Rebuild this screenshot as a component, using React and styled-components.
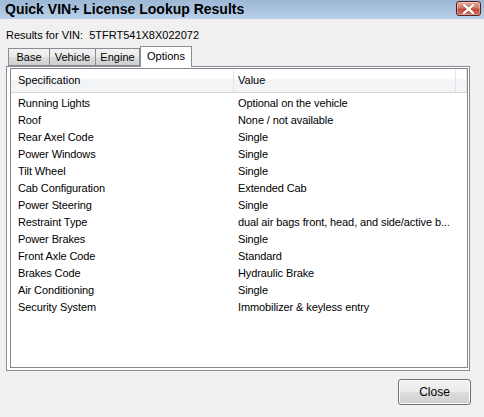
import React from 'react'
import styled, { createGlobalStyle } from 'styled-components';

const Global = createGlobalStyle`
  html, body { margin: 0; padding: 0; background: #f0f0f0; }
  body { font-family: "Liberation Sans", Arial, sans-serif; font-size: 11px; color: #000; }
`;

const rows = [
  ['Running Lights', 'Optional on the vehicle'],
  ['Roof', 'None / not available'],
  ['Rear Axel Code', 'Single'],
  ['Power Windows', 'Single'],
  ['Tilt Wheel', 'Single'],
  ['Cab Configuration', 'Extended Cab'],
  ['Power Steering', 'Single'],
  ['Restraint Type', 'dual air bags front, head, and side/active b...'],
  ['Power Brakes', 'Single'],
  ['Front Axle Code', 'Standard'],
  ['Brakes Code', 'Hydraulic Brake'],
  ['Air Conditioning', 'Single'],
  ['Security System', 'Immobilizer & keyless entry'],
];

const tabs = [
  { label: 'Base', w: 42 },
  { label: 'Vehicle', w: 46 },
  { label: 'Engine', w: 44 },
  { label: 'Options', w: 52, active: true },
];

function CloseGlyph() {
  return (
    <svg width="13" height="10" viewBox="0 0 13 10">
      <path d="M2 1 L11 9 M11 1 L2 9" stroke="#5a2020" strokeWidth="3.6" strokeLinecap="square" opacity="0.45" />
      <path d="M2 1 L11 9 M11 1 L2 9" stroke="#fff" strokeWidth="2.4" strokeLinecap="square" />
    </svg>
  );
}

function App() {
  return (
    <Window>
      <Global />
      <TitleBar>
        <Title>Quick VIN+ License Lookup Results</Title>
        <CloseX><CloseGlyph /></CloseX>
      </TitleBar>
      <Body>
        <VinLine>Results for VIN:&nbsp;&nbsp;5TFRT541X8X022072</VinLine>
        <TabStrip>
          {tabs.map(t => (
            <Tab key={t.label} $w={t.w} $active={t.active}>{t.label}</Tab>
          ))}
        </TabStrip>
        <Panel>
          <ListView>
            <HeaderRow>
              <HeaderCell $w={223} $pad={7}>Specification</HeaderCell>
              <HeaderCell $w={222} $pad={4}>Value</HeaderCell>
              <HeaderFill />
            </HeaderRow>
            <Rows>
              {rows.map(([spec, val]) => (
                <Row key={spec}>
                  <Cell $w={223} $pad={7}>{spec}</Cell>
                  <Cell $w={230} $pad={4}>{val}</Cell>
                </Row>
              ))}
            </Rows>
          </ListView>
        </Panel>
        <Footer>
          <Button>Close</Button>
        </Footer>
      </Body>
    </Window>
  )
}

const Window = styled.div`
  width: 484px;
  height: 417px;
  display: flex;
  flex-direction: column;
  background: #f0f0f0;
  overflow: hidden;
`;

const TitleBar = styled.div`
  height: 19px;
  display: flex;
  align-items: flex-start;
  justify-content: space-between;
  padding-left: 5px;
  background: linear-gradient(to bottom, #9db7d5 0%, #aac3df 50%, #b9d1ea 100%);
`;

const Title = styled.div`
  font-family: "Liberation Sans", Arial, sans-serif;
  font-weight: bold;
  font-size: 14px;
  line-height: 19px;
  color: #000;
`;

const CloseX = styled.div`
  width: 25px;
  height: 15px;
  margin: 1px 3px 0 0;
  box-sizing: border-box;
  border: 1px solid #5a1c22;
  border-radius: 3px;
  display: flex;
  align-items: center;
  justify-content: center;
  background: linear-gradient(to bottom, #e8a89c 0%, #d47a6a 45%, #c24a38 55%, #d0705c 100%);
  box-shadow: inset 0 0 0 1px rgba(255, 255, 255, 0.35);
`;

const Body = styled.div`
  flex: 1;
  display: flex;
  flex-direction: column;
  padding: 0 13px 0 6px;
`;

const VinLine = styled.div`
  margin-top: 10px;
  line-height: 13px;
`;

const TabStrip = styled.div`
  display: flex;
  align-items: flex-end;
  margin-top: 4px;
  padding-left: 2px;
  height: 20px;
  position: relative;
  z-index: 1;
`;

const Tab = styled.div`
  width: ${p => p.$w}px;
  height: ${p => (p.$active ? 21 : 18)}px;
  margin-bottom: ${p => (p.$active ? -1 : 0)}px;
  box-sizing: border-box;
  border: 1px solid #898c95;
  border-bottom: ${p => (p.$active ? 'none' : '1px solid #898c95')};
  border-left: ${p => (p.$active ? '1px solid #898c95' : 'none')};
  background: ${p => (p.$active ? '#ffffff' : 'linear-gradient(to bottom, #f2f2f2 0%, #ebebeb 50%, #dddddd 51%, #cfcfcf 100%)')};
  display: flex;
  align-items: ${p => (p.$active ? 'flex-start' : 'center')};
  padding-top: ${p => (p.$active ? 3 : 0)}px;
  justify-content: center;
  line-height: 13px;
  &:first-child { border-left: 1px solid #898c95; }
`;

const Panel = styled.div`
  width: 464px;
  height: 305px;
  box-sizing: border-box;
  border: 1px solid #898c95;
  background: #ffffff;
  padding: 1px 1px 2px 3px;
  display: flex;
`;

const ListView = styled.div`
  flex: 1;
  border: 1px solid #828790;
  background: #fff;
  display: flex;
  flex-direction: column;
  overflow: hidden;
`;

const HeaderRow = styled.div`
  height: 23px;
  display: flex;
  background: linear-gradient(to bottom, #ffffff 0%, #ffffff 45%, #f3f4f6 46%, #f3f4f6 100%);
  border-bottom: 1px solid #d5d5d5;
`;

const HeaderCell = styled.div`
  width: ${p => p.$w}px;
  box-sizing: border-box;
  padding-left: ${p => p.$pad}px;
  border-right: 1px solid #e3e5e8;
  line-height: 23px;
`;

const HeaderFill = styled.div`
  width: 10px;
  border-right: 1px solid #e3e5e8;
`;

const Rows = styled.div`
  padding-top: 1px;
  display: flex;
  flex-direction: column;
`;

const Row = styled.div`
  height: 17px;
  display: flex;
  align-items: center;
`;

const Cell = styled.div`
  width: ${p => p.$w}px;
  box-sizing: border-box;
  padding-left: ${p => p.$pad}px;
  white-space: nowrap;
  letter-spacing: -0.1px;
`;

const Footer = styled.div`
  display: flex;
  justify-content: flex-end;
  margin-top: 8px;
`;

const Button = styled.button`
  width: 73px;
  height: 26px;
  border: 1px solid #707070;
  border-radius: 3px;
  background: linear-gradient(to bottom, #f2f2f2 0%, #ebebeb 50%, #dddddd 51%, #cfcfcf 100%);
  box-shadow: inset 0 0 0 1px #fcfcfc;
  font-family: "Liberation Sans", Arial, sans-serif;
  font-size: 12px;
  color: #000;
  padding: 0;
`;

export default App;
